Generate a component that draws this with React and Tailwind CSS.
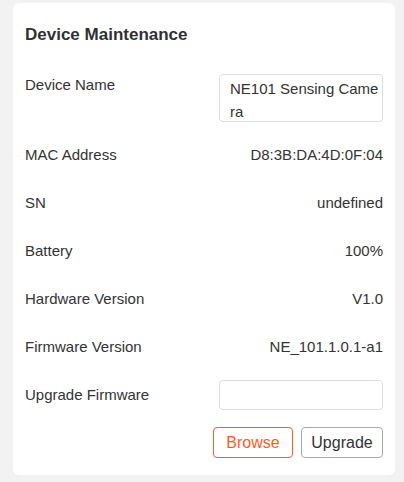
import React from 'react';

const rows = [
  { label: 'MAC Address', value: 'D8:3B:DA:4D:0F:04' },
  { label: 'SN', value: 'undefined' },
  { label: 'Battery', value: '100%' },
  { label: 'Hardware Version', value: 'V1.0' },
  { label: 'Firmware Version', value: 'NE_101.1.0.1-a1' }
];

const App = () => {
  return (
    <div className="min-h-[482px] w-[404px] bg-[#f2f2f2] pt-[3px] pl-[13px] font-['Liberation_Sans',Arial,sans-serif] text-[#333]">
      <div className="w-[382px] h-[472px] bg-white rounded-[6px] px-[12px] pt-[21px]">
        <h1 className="text-[17px] leading-[22px] font-bold text-[#303133]">Device Maintenance</h1>

        <div className="mt-[28px] flex items-start justify-between">
          <span className="text-[15px] leading-[22px]">Device Name</span>
          <div className="w-[164px] h-[48px] border border-[#dcdfe6] rounded-[4px] pl-[10px] pr-[3px] pt-[2px] text-[15px] leading-[23px] break-all">
            NE101 Sensing Camera
          </div>
        </div>

        <div className="mt-[21px] flex flex-col gap-[24px]">
          {rows.map((row) => (
            <div key={row.label} className="flex items-center justify-between h-[24px] text-[15px]">
              <span>{row.label}</span>
              <span>{row.value}</span>
            </div>
          ))}
        </div>

        <div className="mt-[21px] flex items-center justify-between">
          <span className="text-[15px]">Upgrade Firmware</span>
          <div className="w-[164px] h-[30px] border border-[#dcdfe6] rounded-[4px]" />
        </div>

        <div className="mt-[17px] flex justify-end gap-[8px]">
          <button className="w-[80px] h-[31px] border border-[#ff5a1f] text-[#ff5a1f] rounded-[4px] text-[16px] bg-white">
            Browse
          </button>
          <button className="w-[82px] h-[31px] border border-[#aaaaaa] text-[#333] rounded-[4px] text-[16px] bg-white">
            Upgrade
          </button>
        </div>
      </div>
    </div>
  );
};

export default App;
